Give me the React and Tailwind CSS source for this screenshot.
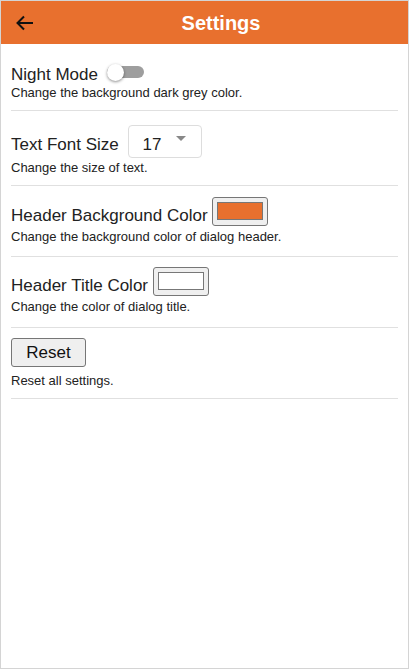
// App.jsx — Settings dialog

const HEADER_COLOR = '#e8702e'

function Toggle() {
  return (
    <span className="relative ml-[9px] inline-block h-[17px] w-[37px] align-[-1px]">
      <span className="absolute left-0 top-[2px] h-[12px] w-[37px] rounded-full bg-[#9e9e9e]" />
      <span className="absolute left-0 top-0 h-[17px] w-[17px] rounded-full bg-white shadow-[0_1px_3px_rgba(0,0,0,0.45)]" />
    </span>
  )
}

function ColorBox({ color }) {
  return (
    <span className="inline-block h-[29px] w-[56px] rounded-[3px] border border-[#767676] bg-[#efefef] px-[4px] pt-[4px] align-[-5px]">
      <span
        className="block h-[18px] w-[46px] border border-[#777]"
        style={{ backgroundColor: color }}
      />
    </span>
  )
}

export default function App() {
  return (
    <div className="flex h-[669px] w-[409px] flex-col border border-[#d4d4d4] bg-white font-['Liberation_Sans',Arial,sans-serif] text-[#222]">
      {/* ── Header ─────────────────────────────────────────── */}
      <header className="flex h-[43px] shrink-0 items-center bg-[#e8702e]">
        <div className="flex w-[33px] shrink-0 justify-end">
          <svg width="19" height="16" viewBox="0 0 19 16" fill="none" stroke="#111" strokeWidth="2">
            <path d="M18 8H3" />
            <path d="M9 1.5 2.5 8 9 14.5" />
          </svg>
        </div>
        <h1 className="flex-1 text-center text-[20px] font-bold leading-[24px] text-white">Settings</h1>
      </header>

      {/* ── Settings list ──────────────────────────────────── */}
      <main className="flex flex-col px-[10px]">
        <section className="border-b border-[#e0e0e0] pb-[10px] pt-[20px]">
          <div className="text-[17px] leading-[20px]">
            Night Mode<Toggle />
          </div>
          <p className="text-[13px] leading-[15px]">Change the background dark grey color.</p>
        </section>

        <section className="border-b border-[#e0e0e0] pb-[10px] pt-[14px]">
          <div className="text-[17px] leading-[20px]">
            Text Font Size{' '}
            <span className="relative ml-[5px] inline-block h-[33px] w-[74px] rounded-[4px] border border-[#ddd] pl-[13px] pt-[11px] leading-[16px]">
              17
              <span className="absolute left-[47px] top-[10px] h-0 w-0 border-x-[5px] border-t-[5px] border-x-transparent border-t-[#888]" />
            </span>
          </div>
          <p className="mt-[2px] text-[13px] leading-[15px]">Change the size of text.</p>
        </section>

        <section className="border-b border-[#e0e0e0] pb-[12px] pt-[11px]">
          <div className="text-[17px] leading-[20px]">
            Header Background Color <ColorBox color={HEADER_COLOR} />
          </div>
          <p className="mt-[3px] text-[13px] leading-[15px]">Change the background color of dialog header.</p>
        </section>

        <section className="border-b border-[#e0e0e0] pb-[13px] pt-[10px]">
          <div className="text-[17px] leading-[20px]">
            Header Title Color <ColorBox color="#ffffff" />
          </div>
          <p className="mt-[3px] text-[13px] leading-[15px]">Change the color of dialog title.</p>
        </section>

        <section className="border-b border-[#e0e0e0] pb-[10px] pt-[10px]">
          <button className="block h-[29px] w-[75px] rounded-[3px] border border-[#767676] bg-[#efefef] text-[17px] leading-[20px] text-[#111]">
            Reset
          </button>
          <p className="mt-[6px] text-[13px] leading-[15px]">Reset all settings.</p>
        </section>
      </main>
    </div>
  )
}
